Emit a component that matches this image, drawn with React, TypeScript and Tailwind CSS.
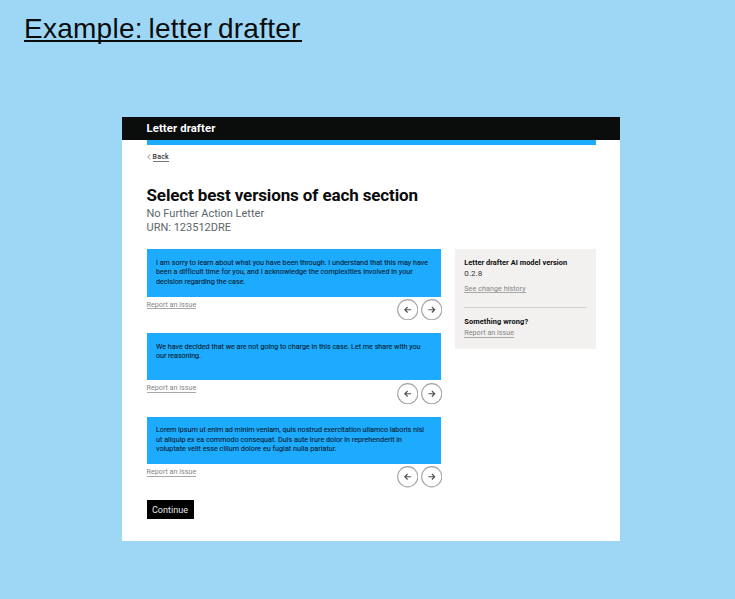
import type { ReactNode } from "react";

type TextLine = { text: string; tracking: string };

const sections: TextLine[][] = [
  [
    { text: "I am sorry to learn about what you have been through. I understand that this may have", tracking: "tracking-[-0.011px]" },
    { text: "been a difficult time for you, and I acknowledge the complexities involved in your", tracking: "tracking-[0.009px]" },
    { text: "decision regarding the case.", tracking: "tracking-[-0.015px]" },
  ],
  [
    { text: "We have decided that we are not going to charge in this case. Let me share with you", tracking: "tracking-[-0.024px]" },
    { text: "our reasoning.", tracking: "tracking-[-0.063px]" },
  ],
  [
    { text: "Lorem ipsum ut enim ad minim veniam, quis nostrud exercitation ullamco laboris nisi", tracking: "tracking-[-0.027px]" },
    { text: "ut aliquip ex ea commodo consequat. Duis aute irure dolor in reprehenderit in", tracking: "tracking-[0.011px]" },
    { text: "voluptate velit esse cillum dolore eu fugiat nulla pariatur.", tracking: "tracking-[0.021px]" },
  ],
];

function GreyLink({ children, className = "" }: { children: ReactNode; className?: string }) {
  return (
    <a className={`block h-[8.5px] w-fit whitespace-nowrap border-b border-[#a8a8a8] text-[7.2px] leading-[8px] text-[#858585] ${className}`}>
      {children}
    </a>
  );
}

function ArrowButton({ direction }: { direction: "left" | "right" }) {
  return (
    <button aria-label={direction === "left" ? "Previous version" : "Next version"} className="size-[21.5px]">
      <svg viewBox="0 0 21.5 21.5" className="size-full" fill="none">
        <circle cx="10.75" cy="10.75" r="10.1" stroke="#a3a5a8" strokeWidth="1.1" />
        <path
          d={direction === "left" ? "M14.1 10.75H7.9M10.6 8L7.8 10.75L10.6 13.5" : "M7.4 10.75H13.6M10.9 8L13.7 10.75L10.9 13.5"}
          stroke="#4b5055"
          strokeWidth="1.1"
        />
      </svg>
    </button>
  );
}

function Section({ lines }: { lines: TextLine[] }) {
  return (
    <section className="h-[83.75px]">
      <div className="h-[47.5px] bg-[#1dabff] pl-[9.5px] pt-[8.7px] text-[7.2px] leading-[9.4px] text-[#0a2536] [-webkit-text-stroke:0.1px_#0a2536]">
        {lines.map((line) => (
          <p key={line.text} className={`whitespace-nowrap ${line.tracking}`}>{line.text}</p>
        ))}
      </div>
      <div className="-mr-[1px] flex justify-between">
        <GreyLink className="mt-[4px]">Report an issue</GreyLink>
        <div className="mt-[2.1px] flex gap-[2.3px]">
          <ArrowButton direction="left" />
          <ArrowButton direction="right" />
        </div>
      </div>
    </section>
  );
}

export default function App() {
  return (
    <main className="h-[599px] w-[735px] overflow-hidden bg-[#9dd7f5] font-[Roboto,sans-serif]">
      <div className="h-[117px] pl-[24px] pt-[12px]">
        <h1 className="h-[30px] w-[277.5px] whitespace-nowrap border-b-2 border-[#0b0c0c] font-['Liberation_Sans',sans-serif] text-[28px] leading-[34px] tracking-[0.26px] text-[#0b0c0c] [word-spacing:-2.4px]">
          Example: letter drafter
        </h1>
      </div>
      <div className="ml-[122px] h-[424px] w-[498px] bg-white">
        <header className="h-[22.5px] bg-[#0b0c0c] pl-[24.5px] text-[11.3px] font-bold leading-[23px] tracking-[0.11px] text-white">
          Letter drafter
        </header>
        <div className="px-[24.5px]">
          <div className="h-[5px] bg-[#1dabff]" />
          <nav className="flex h-[38.5px] items-start pt-[8px]">
            <svg viewBox="0 0 4 6" className="mt-[1px] h-[6px] w-[4px]" fill="none">
              <path d="M3 .5L.8 3L3 5.5" stroke="#777" strokeWidth=".8" />
            </svg>
            <a className="ml-[2px] h-[9px] border-b border-[#777] text-[7px] font-medium leading-[9px] tracking-[0.25px] text-[#333]">Back</a>
          </nav>
          <h2 className="h-[23px] whitespace-nowrap text-[17px] font-bold leading-[24px] tracking-[-0.119px] text-[#0b0c0c]">
            Select best versions of each section
          </h2>
          <div className="h-[43.2px] pt-[1px] text-[11px] leading-[14px] text-[#5d666b]">
            <p>No Further Action Letter</p>
            <p>URN: 123512DRE</p>
          </div>
          <div className="flex items-start justify-between">
            <div className="w-[294.5px]">
              {sections.map((lines) => (
                <Section key={lines[0].text} lines={lines} />
              ))}
              <button className="flex h-[18.6px] w-[47px] items-center justify-center bg-black pt-[2px] text-[9px] tracking-[0.05px] text-[#e8e8e8]">
                Continue
              </button>
            </div>
            <aside className="h-[100.3px] w-[140.2px] bg-[#f2f1f0] px-[9px] pt-[9px] text-[7.4px] leading-[10px] text-[#0b0c0c]">
              <p className="whitespace-nowrap font-bold tracking-[0.03px]">Letter drafter AI model version</p>
              <p className="mt-[1px] text-[8px] tracking-[0.07px] text-[#333]">0.2.8</p>
              <GreyLink className="mt-[5.4px] tracking-[0.044px]">See change history</GreyLink>
              <hr className="mt-[14.4px] border-[#cfcfcf]" />
              <p className="mt-[8.5px] font-bold tracking-[0.11px]">Something wrong?</p>
              <GreyLink className="mt-[2.4px]">Report an issue</GreyLink>
            </aside>
          </div>
        </div>
      </div>
    </main>
  );
}
